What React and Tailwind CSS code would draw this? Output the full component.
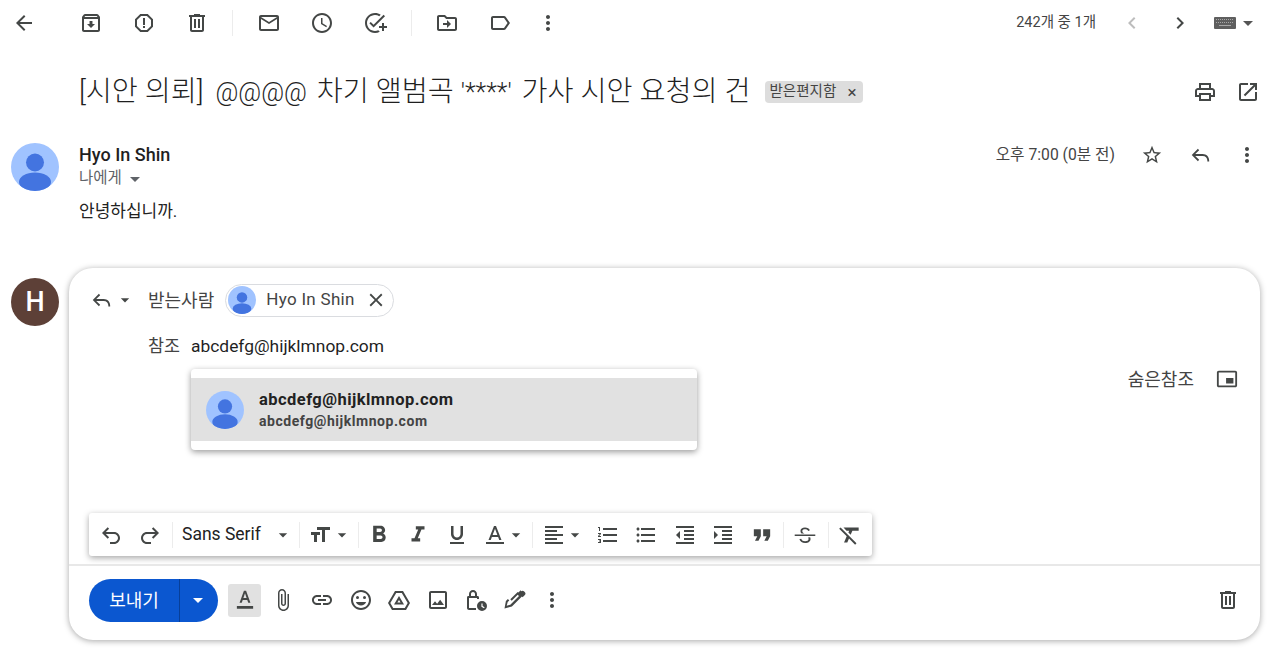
const P = {
  back: "M20 11H7.83l5.59-5.59L12 4l-8 8 8 8 1.41-1.41L7.83 13H20v-2z",
  archive: "M20.54 5.23l-1.39-1.68C18.88 3.21 18.47 3 18 3H6c-.47 0-.88.21-1.16.55L3.46 5.23C3.17 5.57 3 6.02 3 6.5V19c0 1.1.9 2 2 2h14c1.1 0 2-.9 2-2V6.5c0-.48-.17-.93-.46-1.27zM6.24 5h11.52l.83 1H5.42l.82-1zM5 19V8h14v11H5zm8.45-9h-2.9v3H8l4 4 4-4h-2.55z",
  spam: "M15.73 3H8.27L3 8.27v7.46L8.27 21h7.46L21 15.73V8.27L15.73 3zM19 14.9L14.9 19H9.1L5 14.9V9.1L9.1 5h5.8L19 9.1v5.8zM11 7h2v7h-2zM11 15h2v2h-2z",
  trash: "M15 4V3H9v1H4v2h1v13c0 1.1.9 2 2 2h10c1.1 0 2-.9 2-2V6h1V4h-5zm2 15H7V6h10v13zM9 8h2v9H9zm4 0h2v9h-2z",
  mail: "M20 4H4c-1.1 0-2 .9-2 2v12c0 1.1.9 2 2 2h16c1.1 0 2-.9 2-2V6c0-1.1-.9-2-2-2zm0 14H4V8l8 5 8-5v10zm-8-7L4 6h16l-8 5z",
  clock: "M11.99 2C6.47 2 2 6.48 2 12s4.47 10 9.99 10C17.52 22 22 17.52 22 12S17.52 2 11.99 2zM12 20c-4.42 0-8-3.58-8-8s3.58-8 8-8 8 3.58 8 8-3.58 8-8 8zm.5-13H11v6l5.25 3.15.75-1.23-4.5-2.67z",
  task: "M22 5.18L10.59 16.6l-4.24-4.24 1.41-1.41 2.83 2.83 10-10L22 5.18zM12 20c-4.41 0-8-3.59-8-8s3.59-8 8-8c1.57 0 3.04.46 4.28 1.25l1.45-1.45C16.1 2.67 14.13 2 12 2 6.48 2 2 6.48 2 12s4.48 10 10 10c1.73 0 3.36-.44 4.78-1.22l-1.5-1.5c-1 .46-2.11.72-3.28.72zm7-5h-3v2h3v3h2v-3h3v-2h-3v-3h-2v3z",
  move: "M20 6h-8l-2-2H4c-1.11 0-1.99.89-1.99 2L2 18c0 1.11.89 2 2 2h16c1.11 0 2-.89 2-2V8c0-1.11-.89-2-2-2zm0 12H4V6h5.17l2 2H20v10zm-8-4H8v-2h4V9l4 4-4 4v-3z",
  label: "M17.63 5.84C17.27 5.33 16.67 5 16 5L5 5.01C3.9 5.01 3 5.9 3 7v10c0 1.1.9 1.99 2 1.99L16 19c.67 0 1.27-.33 1.63-.84L22 12l-4.37-6.16zM16 17H5V7h11l3.55 5L16 17z",
  more: "M12 8c1.1 0 2-.9 2-2s-.9-2-2-2-2 .9-2 2 .9 2 2 2zm0 2c-1.1 0-2 .9-2 2s.9 2 2 2 2-.9 2-2-.9-2-2-2zm0 6c-1.1 0-2 .9-2 2s.9 2 2 2 2-.9 2-2-.9-2-2-2z",
  left: "M15.41 7.41L14 6l-6 6 6 6 1.41-1.41L10.83 12z",
  right: "M10 6L8.59 7.41 13.17 12l-4.58 4.59L10 18l6-6z",
  print: "M19 8h-1V3H6v5H5c-1.66 0-3 1.34-3 3v6h4v4h12v-4h4v-6c0-1.66-1.34-3-3-3zM8 5h8v3H8V5zm8 12v2H8v-4h8v2zm2-2v-2H6v2H4v-4c0-.55.45-1 1-1h14c.55 0 1 .45 1 1v4h-2z",
  open: "M19 19H5V5h7V3H5c-1.11 0-2 .9-2 2v14c0 1.1.89 2 2 2h14c1.1 0 2-.9 2-2v-7h-2v7zM14 3v2h3.59l-9.83 9.83 1.41 1.41L19 6.41V10h2V3h-7z",
  star: "M22 9.24l-7.19-.62L12 2 9.19 8.63 2 9.24l5.46 4.73L5.82 21 12 17.27 18.18 21l-1.63-7.03L22 9.24zM12 15.4l-3.76 2.27 1-4.28-3.32-2.88 4.38-.38L12 6.1l1.71 4.04 4.38.38-3.32 2.88 1 4.28L12 15.4z",
  reply: "M9.7 5.3 3 12l6.7 6.7 1.4-1.4L6.8 13H15c2.8 0 5 2.2 5 5v1h2v-1c0-3.9-3.1-7-7-7H6.8l4.3-4.3z",
  close: "M19 6.41L17.59 5 12 10.59 6.41 5 5 6.41 10.59 12 5 17.59 6.41 19 12 13.41 17.59 19 19 17.59 13.41 12z",
  pip: "M19 11h-8v6h8v-6zm4 8V4.98C23 3.88 22.1 3 21 3H3c-1.1 0-2 .88-2 1.98V19c0 1.1.9 2 2 2h18c1.1 0 2-.9 2-2zm-2 .02H3V4.97h18v14.05z",
  undo: "M8.7 4.3 3 10l5.7 5.7 1.4-1.4L6.8 11H15c2.2 0 4 1.8 4 4s-1.8 4-4 4h-4v2h4c3.3 0 6-2.7 6-6s-2.7-6-6-6H6.8l3.3-3.3z",
  redo: "M15.3 4.3 21 10l-5.7 5.7-1.4-1.4 3.3-3.3H9c-2.2 0-4 1.8-4 4s1.8 4 4 4h4v2H9c-3.3 0-6-2.7-6-6s2.7-6 6-6h8.2l-3.3-3.3z",
  size: "M9 4v3h5v12h3V7h5V4H9zm-6 8h3v7h3v-7h3V9H3v3z",
  bold: "M15.6 10.79c.97-.67 1.65-1.77 1.65-2.79 0-2.26-1.75-4-4-4H7v14h7.04c2.09 0 3.71-1.7 3.71-3.79 0-1.52-.86-2.82-2.15-3.42zM10 6.5h3c.83 0 1.5.67 1.5 1.5s-.67 1.5-1.5 1.5h-3v-3zm3.5 9H10v-3h3.5c.83 0 1.5.67 1.5 1.5s-.67 1.5-1.5 1.5z",
  italic: "M10 4v3h2.21l-3.42 8H6v3h8v-3h-2.21l3.42-8H18V4z",
  underline: "M12 17c3.31 0 6-2.69 6-6V3h-2.5v8c0 1.93-1.57 3.5-3.5 3.5S8.5 12.93 8.5 11V3H6v8c0 3.31 2.69 6 6 6zm-7 2v2h14v-2H5z",
  color: "M11 3 5.5 17h2.25l1.12-3h6.25l1.12 3h2.25L13 3h-2zm-1.38 9L12 5.67 14.38 12H9.62zM3 19h18v2H3z",
  colorBar: "M11 3.500 7 14.500h2l.9-2.600h4.200l.9 2.600h2L13 3.500h-2zm-.5 6.700L12 5.800l1.500 4.400zM4.500 17.500h15V20h-15z",
  align: "M15 15H3v2h12v-2zm0-8H3v2h12V7zM3 13h18v-2H3v2zm0 8h18v-2H3v2zM3 3v2h18V3H3z",
  numbered: "M2 17h2v.5H3v1h1v.5H2v1h3v-4H2v1zm1-9h1V4H2v1h1v3zm-1 3h1.8L2 13.1v.9h3v-1H3.2L5 10.9V10H2v1zm5-6v2h14V5H7zm0 14h14v-2H7v2zm0-6h14v-2H7v2z",
  bulleted: "M4 10.5c-.83 0-1.5.67-1.5 1.5s.67 1.5 1.5 1.5 1.5-.67 1.5-1.5-.67-1.5-1.5-1.5zm0-6c-.83 0-1.5.67-1.5 1.5S3.17 7.5 4 7.5 5.5 6.83 5.5 6 4.83 4.5 4 4.5zm0 12c-.83 0-1.5.68-1.5 1.5s.68 1.5 1.5 1.5 1.5-.68 1.5-1.5-.67-1.5-1.5-1.5zM7 19h14v-2H7v2zm0-6h14v-2H7v2zm0-8v2h14V5H7z",
  outdent: "M11 17h10v-2H11v2zm-8-5l4 4V8l-4 4zm0 9h18v-2H3v2zM3 3v2h18V3H3zm8 6h10V7H11v2zm0 4h10v-2H11v2z",
  indent: "M3 21h18v-2H3v2zM3 8v8l4-4-4-4zm8 9h10v-2H11v2zM3 3v2h18V3H3zm8 6h10V7H11v2zm0 4h10v-2H11v2z",
  quote: "M6 17h3l2-4V7H5v6h3zm8 0h3l2-4V7h-6v6h3z",
  strike: "M16.500 7.500C15.800 5.800 14.200 5 12 5 9.500 5 7.800 6.300 7.800 8.200c0 1 .4 1.700 1 2.300h2.700c-1.400-.5-2-1.200-2-2.200 0-1.100 1-1.700 2.500-1.700s2.500.6 3 1.700zM2.500 11.500v1.500h19v-1.500zM14.800 14.200c.3.4.5.8.5 1.400 0 1.300-1.300 2.100-3.200 2.100-1.800 0-3.100-.7-3.700-2.300l-1.600.5c.8 2.200 2.700 3.400 5.300 3.400 2.900 0 5-1.400 5-3.700 0-.6-.1-1.100-.4-1.500z",
  clear: "M3.27 5 2 6.27l6.97 6.97L6.5 19h3l1.57-3.66L16.73 21 18 19.73 3.55 5.27 3.27 5zM6 5v.18L8.82 8h2.4l-.72 1.68 2.1 2.1L14.21 8H20V5H6z",
  attach: "M16.5 6v11.5c0 2.21-1.79 4-4 4s-4-1.79-4-4V5c0-1.38 1.12-2.5 2.5-2.5s2.5 1.12 2.5 2.5v10.5c0 .55-.45 1-1 1s-1-.45-1-1V6H10v9.5c0 1.38 1.12 2.5 2.5 2.5s2.5-1.12 2.5-2.5V5c0-2.21-1.79-4-4-4S7 2.79 7 5v12.5c0 3.04 2.46 5.5 5.5 5.5s5.5-2.46 5.5-5.5V6h-1.5z",
  link: "M3.9 12c0-1.71 1.39-3.1 3.1-3.1h4V7H7c-2.76 0-5 2.24-5 5s2.24 5 5 5h4v-1.9H7c-1.71 0-3.1-1.39-3.1-3.1zM8 13h8v-2H8v2zm9-6h-4v1.9h4c1.71 0 3.1 1.39 3.1 3.1s-1.39 3.1-3.1 3.1h-4V17h4c2.76 0 5-2.24 5-5s-2.24-5-5-5z",
  emoji: "M11.99 2C6.47 2 2 6.48 2 12s4.47 10 9.99 10C17.52 22 22 17.52 22 12S17.52 2 11.99 2zM12 20c-4.42 0-8-3.58-8-8s3.58-8 8-8 8 3.58 8 8-3.58 8-8 8zM8.5 8a1.5 1.5 0 1 0 0 3 1.5 1.5 0 0 0 0-3zM15.5 8a1.5 1.5 0 1 0 0 3 1.5 1.5 0 0 0 0-3zM12 17.5c2.33 0 4.31-1.46 5.11-3.5H6.89c.8 2.04 2.78 3.5 5.11 3.5z",
  drive: "M8 3h8l7 12-4 7H5l-4-7zM9.2 5 3.3 15l2.9 5h11.6l2.9-5-5.9-10zM12 8l5 8.5H7zm0 4-1.6 2.5h3.2z",
  photo: "M19 5v14H5V5h14m0-2H5c-1.1 0-2 .9-2 2v14c0 1.1.9 2 2 2h14c1.1 0 2-.9 2-2V5c0-1.1-.9-2-2-2zm-4.86 8.86-3 3.87L9 13.14 6 17h12l-3.86-5.14z",
  lock: "M13 8h-1V6c0-2.200-1.800-4-4-4S4 3.800 4 6v2H3c-.6 0-1 .9-1 2v10c0 1.100.9 2 2 2h7v-2H4V10h8v1h2v-1c0-1.100-.4-2-1-2zM6 8V6c0-1.100.9-2 2-2s2 .9 2 2v2zM17 13a5 5 0 1 0 0 10 5 5 0 0 0 0-10zm2 7.300-2.600-1.600v-3.200h1.200v2.500l2 1.200z",
  pen: "M17.700 2.300 15.400 4.600l-.7-.7-7.400 7.400 1.400 1.400 6-6 1.300 1.300L7.300 16.700l-3.600 1 1-3.600 1.600-1.600-1.400-1.400-2 2L1.500 20.500l7.400-1.900 10-10 .7.700 2.300-2.300c.8-.8.800-2 0-2.800l-1-1c-.8-.7-2-.7-2.700 0z",
  caret: "M7 10l5 5 5-5z",
};

const Icon = ({ d, className = "w-6 h-6 text-[#444746]" }) => (
  <svg viewBox="0 0 24 24" fill="currentColor" className={`shrink-0 ${className}`}>
    <path d={d} />
  </svg>
);

const Avatar = ({ className }) => (
  <svg viewBox="0 0 48 48" className={`shrink-0 ${className}`}>
    <defs>
      <clipPath id="avatar-clip">
        <circle cx="24" cy="24" r="24" />
      </clipPath>
    </defs>
    <circle cx="24" cy="24" r="24" fill="#a0c3ff" />
    <g clipPath="url(#avatar-clip)" fill="#4374e0">
      <circle cx="24" cy="19.500" r="9" />
      <ellipse cx="24" cy="39" rx="16" ry="9.500" />
    </g>
  </svg>
);

const Keyboard = () => (
  <svg viewBox="0 0 22 12" className="w-[22px] h-[12px] ml-[22px] shrink-0">
    <rect width="22" height="12" rx="1" fill="#5f5f5f" />
    <path d="M2 2.500h18M2 5.500h18" stroke="#a8a8a8" strokeWidth="1" strokeDasharray="1 1" />
    <path d="M5 8.500h12" stroke="#a8a8a8" strokeWidth="1" />
  </svg>
);

const Divider = ({ className = "" }) => <div className={`w-px h-[26px] bg-[#ececec] shrink-0 ${className}`} />;

const App = () => {
  return (
    <div className="w-[1280px] h-[655px] overflow-hidden bg-white text-[#222] font-['Roboto','Noto_Sans_CJK_KR',sans-serif]">
      {/* top toolbar */}
      <div className="flex items-center h-[45px] pl-[12px]">
        <Icon d={P.back} />
        <div className="flex items-center gap-[29px] ml-[43px]">
          <Icon d={P.archive} />
          <Icon d={P.spam} />
          <Icon d={P.trash} />
        </div>
        <Divider className="ml-[23px]" />
        <div className="flex items-center gap-[29px] ml-[24px]">
          <Icon d={P.mail} />
          <Icon d={P.clock} />
          <Icon d={P.task} />
        </div>
        <Divider className="ml-[24px]" />
        <div className="flex items-center gap-[29px] ml-[23px]">
          <Icon d={P.move} />
          <Icon d={P.label} />
        </div>
        <Icon d={P.more} className="w-6 h-6 text-[#444746] ml-[24px]" />
        <span className="ml-auto text-[14.500px] text-[#444]">242개 중 1개</span>
        <Icon d={P.left} className="w-6 h-6 text-[#bdbdbd] ml-[24px]" />
        <Icon d={P.right} className="w-6 h-6 text-[#444746] ml-[24px]" />
        <Keyboard />
        <Icon d={P.caret} className="w-6 h-6 text-[#555] mr-[20px]" />
      </div>

      {/* subject */}
      <div className="flex items-center h-[44px] mt-[25px] pl-[79px] pr-[20px]">
        <h1 className="text-[28.300px] font-light text-[#1f1f1f] whitespace-nowrap">[시안 의뢰] <span className="text-[25px] ml-[5px] mr-[3px]">@@@@</span> 차기 앨범곡 <span className="text-[25px] mr-[3px]">'****'</span> 가사 시안 요청의 건</h1>
        <div className="flex items-center justify-between w-[98px] h-[22px] ml-[14px] pl-[5px] pr-[6px] bg-[#dddddd] rounded-[4px] text-[14.500px] text-[#444]">
          받은편지함
          <span className="text-[17px] leading-none">×</span>
        </div>
        <Icon d={P.print} className="w-6 h-6 text-[#444746] ml-auto" />
        <Icon d={P.open} className="w-6 h-6 text-[#444746] ml-[19px]" />
      </div>

      {/* message */}
      <div className="flex mt-[29px] pl-[11px] pr-[21px] h-[125px]">
        <Avatar className="w-12 h-12" />
        <div className="ml-[20px] pt-[1px] flex-1">
          <div className="flex items-center h-[22px]">
            <span className="mb-[2px] text-[18px] font-medium text-[#1f1f1f]">Hyo In Shin</span>
            <span className="ml-auto text-[15.700px] text-[#444]">오후 7:00 (0분 전)</span>
            <Icon d={P.star} className="w-[22px] h-[22px] text-[#444746] ml-[26px]" />
            <Icon d={P.reply} className="w-[22px] h-[22px] text-[#444746] ml-[26px]" />
            <Icon d={P.more} className="w-6 h-6 text-[#444746] ml-[24px]" />
          </div>
          <div className="flex items-center h-[26px] text-[15.500px] text-[#5f6368]">
            나에게
            <Icon d={P.caret} className="w-[24px] h-[24px] text-[#5f6368] ml-[1px]" />
          </div>
          <div className="mt-[7px] text-[17px] leading-[24px] text-[#222]">안녕하십니까.</div>
        </div>
      </div>

      {/* compose */}
      <div className="flex pl-[11px] pr-[20px]">
        <div className="flex items-center justify-center w-12 h-12 mt-[10px] rounded-full bg-[#5d4037] text-white text-[27px] font-medium shrink-0">H</div>
        <div className="relative flex flex-col ml-[10px] w-[1191px] h-[372px] bg-white rounded-[24px] shadow-[0_1px_6px_rgba(0,0,0,0.35)]">
          <div className="flex items-center mt-[16px] h-[32px] pl-[21px] text-[18px] text-[#444]">
            <Icon d={P.reply} className="w-[22px] h-[22px] text-[#444746]" />
            <Icon d={P.caret} className="w-[20px] h-[20px] text-[#444746] ml-[3px]" />
            <span className="ml-[13px]">받는사람</span>
            <div className="flex items-center h-[33px] ml-[11px] pl-[2px] pr-[6px] border border-[#dadce0] rounded-full">
              <Avatar className="w-[28px] h-[28px]" />
              <span className="ml-[10px] text-[17px] tracking-[0.300px]">Hyo In Shin</span>
              <Icon d={P.close} className="w-[22px] h-[22px] text-[#444746] ml-[10px]" />
            </div>
          </div>

          <div className="flex items-center mt-[16px] h-[28px] pl-[79px] text-[17.400px]">
            <span className="text-[#444]">참조</span>
            <span className="ml-[11px] text-[#1f1f1f]">abcdefg@hijklmnop.com</span>
          </div>

          <div className="flex items-center justify-end h-[24px] mt-[7px] pr-[22px] text-[18px] text-[#444]">
            숨은참조
            <Icon d={P.pip} className="w-[22px] h-[22px] text-[#444746] ml-[22px]" />
          </div>

          {/* autocomplete dropdown */}
          <div className="absolute left-[122px] top-[101px] w-[506px] h-[81px] py-[9px] bg-white rounded-[4px] shadow-[0_2px_6px_rgba(0,0,0,0.4)]">
            <div className="flex items-center h-[63px] pl-[15px] bg-[#e1e1e1]">
              <Avatar className="w-[38px] h-[38px]" />
              <div className="ml-[15px]">
                <div className="text-[16.500px] leading-[22px] font-bold text-[#222] tracking-[0.450px]">abcdefg@hijklmnop.com</div>
                <div className="text-[14px] leading-[20px] font-bold text-[#444] tracking-[0.550px]">abcdefg@hijklmnop.com</div>
              </div>
            </div>
          </div>

          {/* formatting toolbar */}
          <div className="flex items-center self-start w-[783px] h-[43px] mt-[122px] ml-[20px] bg-white rounded-[3px] shadow-[0_2px_6px_rgba(0,0,0,0.35)]">
            <Icon d={P.undo} className="w-[24px] h-[24px] text-[#444746] ml-[10px]" />
            <Icon d={P.redo} className="w-[24px] h-[24px] text-[#444746] ml-[15px]" />
            <Divider className="ml-[10px]" />
            <span className="w-[80px] ml-[9px] text-[17.500px] text-[#222] whitespace-nowrap">Sans Serif</span>
            <Icon d={P.caret} className="w-[20px] h-[20px] text-[#444746] ml-[11px]" />
            <Divider className="ml-[6px]" />
            <Icon d={P.size} className="w-[24px] h-[24px] text-[#444746] ml-[8px]" />
            <Icon d={P.caret} className="w-[20px] h-[20px] text-[#444746]" />
            <Divider className="ml-[6px]" />
            <Icon d={P.bold} className="w-[28px] h-[28px] text-[#444746] ml-[6px]" />
            <Icon d={P.italic} className="w-[26px] h-[26px] text-[#444746] ml-[12px]" />
            <Icon d={P.underline} className="w-[24px] h-[24px] text-[#444746] ml-[14px]" />
            <Icon d={P.color} className="w-[24px] h-[24px] text-[#444746] ml-[14px]" />
            <Icon d={P.caret} className="w-[20px] h-[20px] text-[#444746] -ml-[1px]" />
            <Divider className="ml-[6px]" />
            <Icon d={P.align} className="w-[24px] h-[24px] text-[#444746] ml-[9px]" />
            <Icon d={P.caret} className="w-[20px] h-[20px] text-[#444746] -ml-[1px]" />
            <Icon d={P.numbered} className="w-[24px] h-[24px] text-[#444746] ml-[11px]" />
            <Icon d={P.bulleted} className="w-[24px] h-[24px] text-[#444746] ml-[14px]" />
            <Icon d={P.outdent} className="w-[24px] h-[24px] text-[#444746] ml-[15px]" />
            <Icon d={P.indent} className="w-[24px] h-[24px] text-[#444746] ml-[14px]" />
            <Icon d={P.quote} className="w-[28px] h-[28px] text-[#444746] ml-[13px]" />
            <Divider className="ml-[7px]" />
            <Icon d={P.strike} className="w-[26px] h-[26px] text-[#444746] ml-[8px]" />
            <Divider className="ml-[10px]" />
            <Icon d={P.clear} className="w-[26px] h-[26px] text-[#444746] ml-[8px]" />
          </div>

          {/* bottom bar */}
          <div className="flex items-center flex-1 mt-[8px] pl-[20px] pr-[20px] pb-[6px] border-t-2 border-[#e8e8e8]">
            <div className="flex items-center h-[43px] w-[129px] bg-[#0b57d0] rounded-full text-white">
              <span className="flex items-center justify-center w-[91px] h-full text-[18px] border-r border-[#073f99]">보내기</span>
              <Icon d={P.caret} className="w-[24px] h-[24px] text-white ml-[6px]" />
            </div>
            <div className="flex items-center justify-center w-[33px] h-[33px] ml-[10px] bg-[#e1e1e1] rounded-[3px]">
              <Icon d={P.colorBar} className="w-[26px] h-[26px] text-[#444746]" />
            </div>
            <Icon d={P.attach} className="w-[24px] h-[24px] text-[#444746] ml-[10px]" />
            <Icon d={P.link} className="w-[24px] h-[24px] text-[#444746] ml-[15px]" />
            <Icon d={P.emoji} className="w-[24px] h-[24px] text-[#444746] ml-[15px]" />
            <Icon d={P.drive} className="w-[24px] h-[24px] text-[#444746] ml-[14px]" />
            <Icon d={P.photo} className="w-[24px] h-[24px] text-[#444746] ml-[15px]" />
            <Icon d={P.lock} className="w-[24px] h-[24px] text-[#444746] ml-[15px]" />
            <Icon d={P.pen} className="w-[24px] h-[24px] text-[#444746] ml-[14px]" />
            <Icon d={P.more} className="w-[24px] h-[24px] text-[#444746] ml-[13px]" />
            <Icon d={P.trash} className="w-[24px] h-[24px] text-[#444746] ml-auto" />
          </div>
        </div>
      </div>
    </div>
  );
};

export default App;
